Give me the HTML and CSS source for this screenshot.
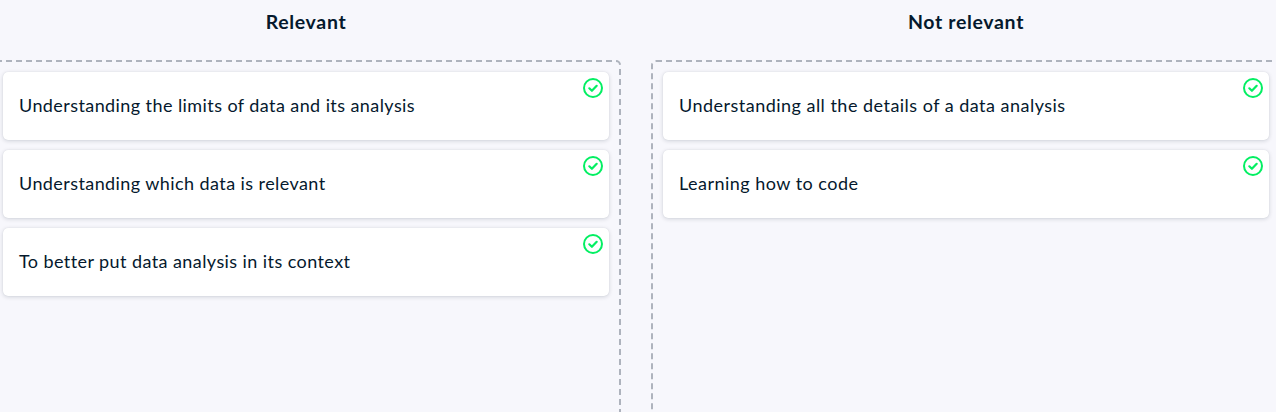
FILE: index.html
```html
<!DOCTYPE html>
<html lang="en">
<head>
<meta charset="utf-8">
<title>Classify the statements</title>
<link rel="stylesheet" href="styles.css">
</head>
<body>
<svg class="defs" width="0" height="0" aria-hidden="true">
<symbol id="check" viewBox="0 0 20 20"><circle cx="10" cy="10" r="9" fill="none" stroke="currentColor" stroke-width="2"/><path d="M6.3 10.3 8.9 12.8 13.7 7.8" fill="none" stroke="currentColor" stroke-width="2.2" stroke-linecap="round" stroke-linejoin="round"/></symbol>
</svg>
<main class="board">
<section class="column">
<h2 class="title">Relevant</h2>
<div class="zone">
<div class="card"><span>Understanding the limits of data and its analysis</span><svg class="check"><use href="#check"/></svg></div>
<div class="card"><span>Understanding which data is relevant</span><svg class="check"><use href="#check"/></svg></div>
<div class="card"><span>To better put data analysis in its context</span><svg class="check"><use href="#check"/></svg></div>
</div>
</section>
<section class="column">
<h2 class="title">Not relevant</h2>
<div class="zone">
<div class="card"><span class="wide">Understanding all the details of a data analysis</span><svg class="check"><use href="#check"/></svg></div>
<div class="card"><span class="wide">Learning how to code</span><svg class="check"><use href="#check"/></svg></div>
</div>
</section>
</main>
</body>
</html>
```
FILE: styles.css
```css
* { box-sizing: border-box; }
html, body { height: 100%; margin: 0; overflow: hidden; }
body { background: #f7f7fc; color: #05192d; font-family: Lato, "Liberation Sans", sans-serif; }
.defs { display: block; height: 0; }
.board { display: grid; grid-template-columns: 630px 630px; column-gap: 30px; align-items: start; margin-left: -9px; height: 100vh; overflow: hidden; }
.column { display: flex; flex-direction: column; height: 493px; }
.title { margin: 0; height: 60px; flex: none; padding-top: 10px; font-size: 19.5px; line-height: 24px; font-weight: 700; letter-spacing: .66px; text-align: center; }
.zone { flex: 1; display: flex; flex-direction: column; gap: 10px; padding: 10px; border: 2px dashed #aeb3bd; border-radius: 5px; }
.card { position: relative; display: flex; align-items: center; height: 68px; padding: 0 16px 2px; background: #fff; border-radius: 5px; box-shadow: 0 0 1px rgba(5,25,45,.12), 0 1px 4px rgba(5,25,45,.16); font-size: 18px; line-height: 24px; letter-spacing: .42px; white-space: nowrap; }
.wide { letter-spacing: .48px; }
.check { position: absolute; top: 6px; right: 6px; width: 20px; height: 20px; color: #03ef62; }
```
